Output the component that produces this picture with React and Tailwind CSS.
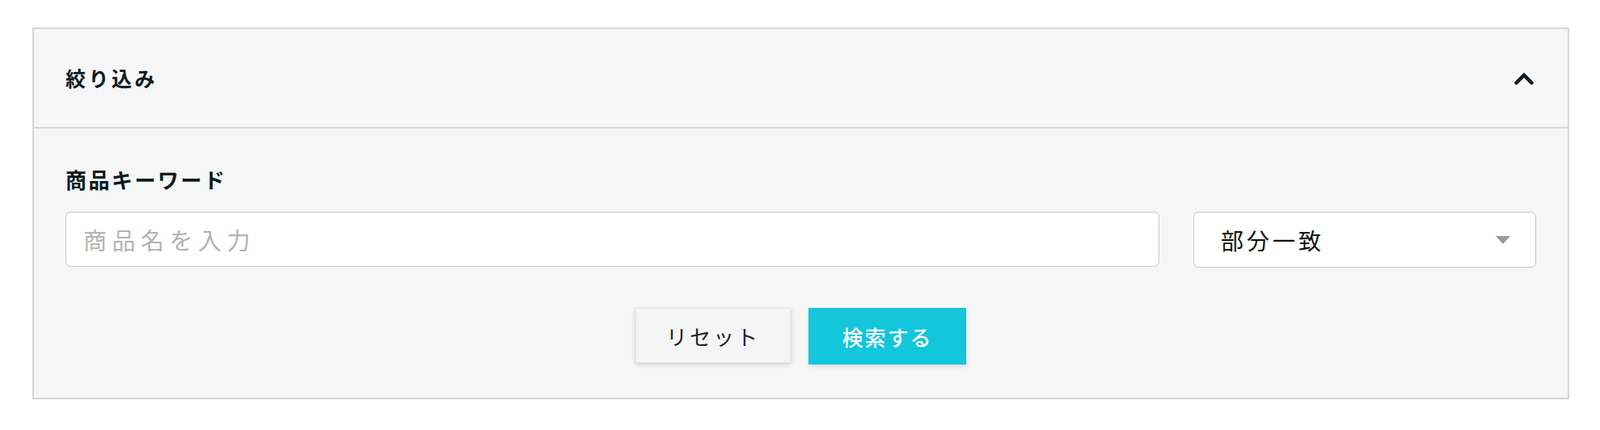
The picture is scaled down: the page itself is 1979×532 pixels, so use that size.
import React from "react";

const font = { fontFamily: '"Noto Sans CJK JP", "Noto Sans", sans-serif' };

export default function App() {
  return (
    <div className="w-full bg-white pt-[34px] pb-[41px] pl-[40px] pr-[38px]" style={font}>
      <div className="border-2 border-[#d6d6d6] bg-[#f6f6f6]">
        <div className="flex h-[123px] items-center justify-between border-b-2 border-[#d6d6d6] pl-[39px] pr-[42px]">
          <h2 className="text-[25px] leading-none font-bold tracking-[3.5px] text-[#0e1b20]">絞り込み</h2>
          <svg width="24" height="16" viewBox="0 0 24 16" className="text-[#0e1b20]">
            <polyline points="2.5,13.5 12,4 21.5,13.5" fill="none" stroke="currentColor" strokeWidth="4.5" strokeLinecap="round" strokeLinejoin="miter" />
          </svg>
        </div>
        <div className="px-[39px] pt-[50px] pb-[41px]">
          <div className="text-[26px] leading-none font-bold tracking-[2.5px] text-[#0e1b20]">商品キーワード</div>
          <div className="mt-[27px] flex gap-[42px]">
            <input
              type="text"
              placeholder="商品名を入力"
              className="h-[68px] flex-1 rounded-[6px] border border-[#c9c9c9] bg-white px-[21px] text-[29px] tracking-[6.5px] text-[#222] outline-none placeholder:text-[#b3b3b3]"
            />
            <div className="flex h-[69px] w-[424px] items-center justify-between rounded-[6px] border border-[#c9c9c9] bg-white pl-[33px] pr-[31px]">
              <span className="text-[28px] leading-none tracking-[4px] text-[#111]">部分一致</span>
              <svg width="18" height="10" viewBox="0 0 18 10">
                <polygon points="0,0 18,0 9,10" fill="#999999" />
              </svg>
            </div>
          </div>
          <div className="mt-[50px] flex justify-center gap-[22px]">
            <button className="flex h-[68px] w-[192px] items-center justify-center border border-[#e4e4e4] bg-[#f5f5f5] text-[26px] tracking-[3px] text-[#1a2328] shadow-[0_2px_6px_rgba(0,0,0,0.16)]">
              リセット
            </button>
            <button className="flex h-[70px] w-[195px] items-center justify-center bg-[#14c6dc] text-[26px] font-medium tracking-[2px] text-white shadow-[0_2px_5px_rgba(0,0,0,0.12)]">
              検索する
            </button>
          </div>
        </div>
      </div>
    </div>
  );
}
